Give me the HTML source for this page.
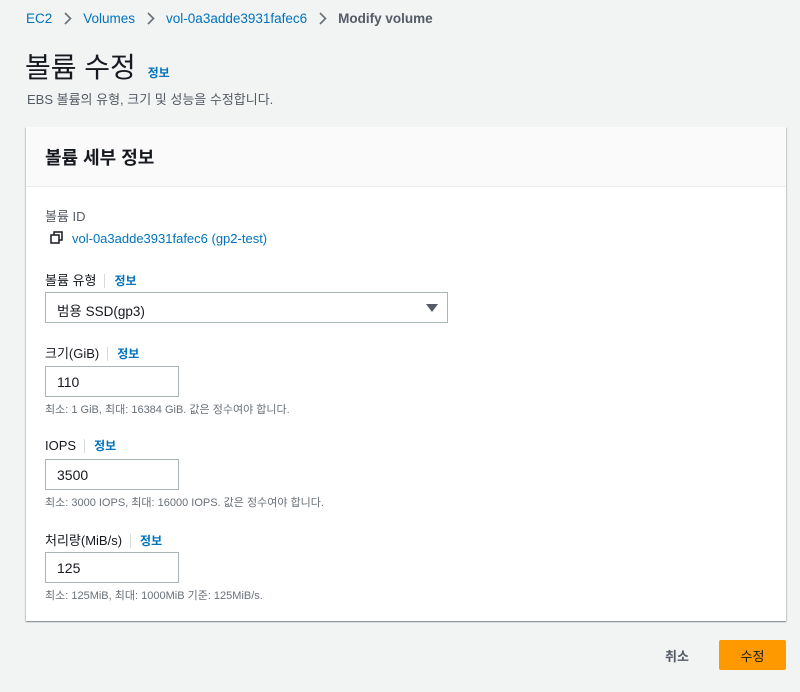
<!DOCTYPE html>
<html><head><meta charset="utf-8"><style>
*{margin:0;padding:0;box-sizing:border-box}
body{width:800px;height:692px;background:#f2f3f3;font-family:"Liberation Sans","Noto Sans CJK KR",sans-serif;color:#16191f;position:relative;overflow:hidden}
.a{position:absolute;white-space:nowrap}
.l{color:#0073bb}
.info{color:#0073bb;font-size:12px;font-weight:bold;border-left:1px solid #d5dbdb;padding-left:9px;margin-left:8px}
.card{position:absolute;left:26px;top:127px;width:760px;height:494px;background:#fff;box-shadow:0 1px 1px 0 rgba(0,28,36,.3),1px 1px 1px 0 rgba(0,28,36,.15),-1px 1px 1px 0 rgba(0,28,36,.15)}
.hd{position:absolute;left:0;top:0;width:760px;height:60px;background:#fafafa;border-bottom:1px solid #eaeded}
.in{position:absolute;border:1px solid #aab7b8;height:31px;font-size:14px;padding:7px 11px;background:#fff}
.lab{font-size:13px}
.hint{font-size:11px;color:#687078}
.ch{display:inline-block;vertical-align:-2px;margin:0 11px 0 12px}
</style></head><body>
<div class="a" style="left:26px;top:11px;font-size:13.5px;"><span class="l">EC2</span><svg class="ch" width="8" height="13" viewBox="0 0 8 13"><path d="M1 1l5.5 5.5L1 12" fill="none" stroke="#687078" stroke-width="1.6"/></svg><span class="l">Volumes</span><svg class="ch" width="8" height="13" viewBox="0 0 8 13"><path d="M1 1l5.5 5.5L1 12" fill="none" stroke="#687078" stroke-width="1.6"/></svg><span class="l">vol-0a3adde3931fafec6</span><svg class="ch" width="8" height="13" viewBox="0 0 8 13"><path d="M1 1l5.5 5.5L1 12" fill="none" stroke="#687078" stroke-width="1.6"/></svg><span style="color:#545b64;font-weight:bold">Modify volume</span></div>
<div class="a" style="left:25px;top:46px;font-size:28px;">볼륨 수정 <span style="color:#0073bb;font-size:12px;font-weight:bold;margin-left:4px">정보</span></div>
<div class="a" style="left:27px;top:89px;font-size:13px;color:#545b64">EBS 볼륨의 유형, 크기 및 성능을 수정합니다.</div>
<div class="card"><div class="hd"></div>
<div class="a" style="left:19px;top:17px;font-size:18px;font-weight:bold">볼륨 세부 정보</div>
<div class="a lab" style="left:19px;top:79px;font-size:13px;color:#545b64">볼륨 ID</div>
<div class="a" style="left:24px;top:104px;font-size:13px"><svg width="13" height="13" viewBox="0 0 13 13" style="vertical-align:-1px;margin-right:9px"><rect x="1" y="4" width="8" height="8" fill="none" stroke="#16191f" stroke-width="1.5"/><path d="M4 4V1h8v8H9" fill="none" stroke="#16191f" stroke-width="1.5"/></svg><span class="l">vol-0a3adde3931fafec6 (gp2-test)</span></div>
<div class="a lab" style="left:19px;top:143px">볼륨 유형<span class="info">정보</span></div>
<div class="in" style="left:19px;top:165px;width:403px;font-size:13.5px">범용 SSD(gp3)<span style="position:absolute;right:9px;top:11px;width:0;height:0;border-left:6px solid transparent;border-right:6px solid transparent;border-top:8px solid #545b64"></span></div>
<div class="a lab" style="left:19px;top:216px">크기(GiB)<span class="info">정보</span></div>
<div class="in" style="left:19px;top:239px;width:134px">110</div>
<div class="a hint" style="left:19px;top:274px">최소: 1 GiB, 최대: 16384 GiB. 값은 정수여야 합니다.</div>
<div class="a lab" style="left:19px;top:310px">IOPS<span class="info">정보</span></div>
<div class="in" style="left:19px;top:332px;width:134px">3500</div>
<div class="a hint" style="left:19px;top:367px">최소: 3000 IOPS, 최대: 16000 IOPS. 값은 정수여야 합니다.</div>
<div class="a lab" style="left:19px;top:403px">처리량(MiB/s)<span class="info">정보</span></div>
<div class="in" style="left:19px;top:425px;width:134px">125</div>
<div class="a hint" style="left:19px;top:460px">최소: 125MiB, 최대: 1000MiB 기준: 125MiB/s.</div>
</div>
<div class="a" style="left:665px;top:646px;font-size:13px;color:#545b64;font-weight:bold">취소</div>
<div class="a" style="left:719px;top:640px;width:67px;height:30px;background:#ff9900;border-radius:2px;font-size:13px;display:flex;align-items:center;justify-content:center">수정</div>
</body></html>
